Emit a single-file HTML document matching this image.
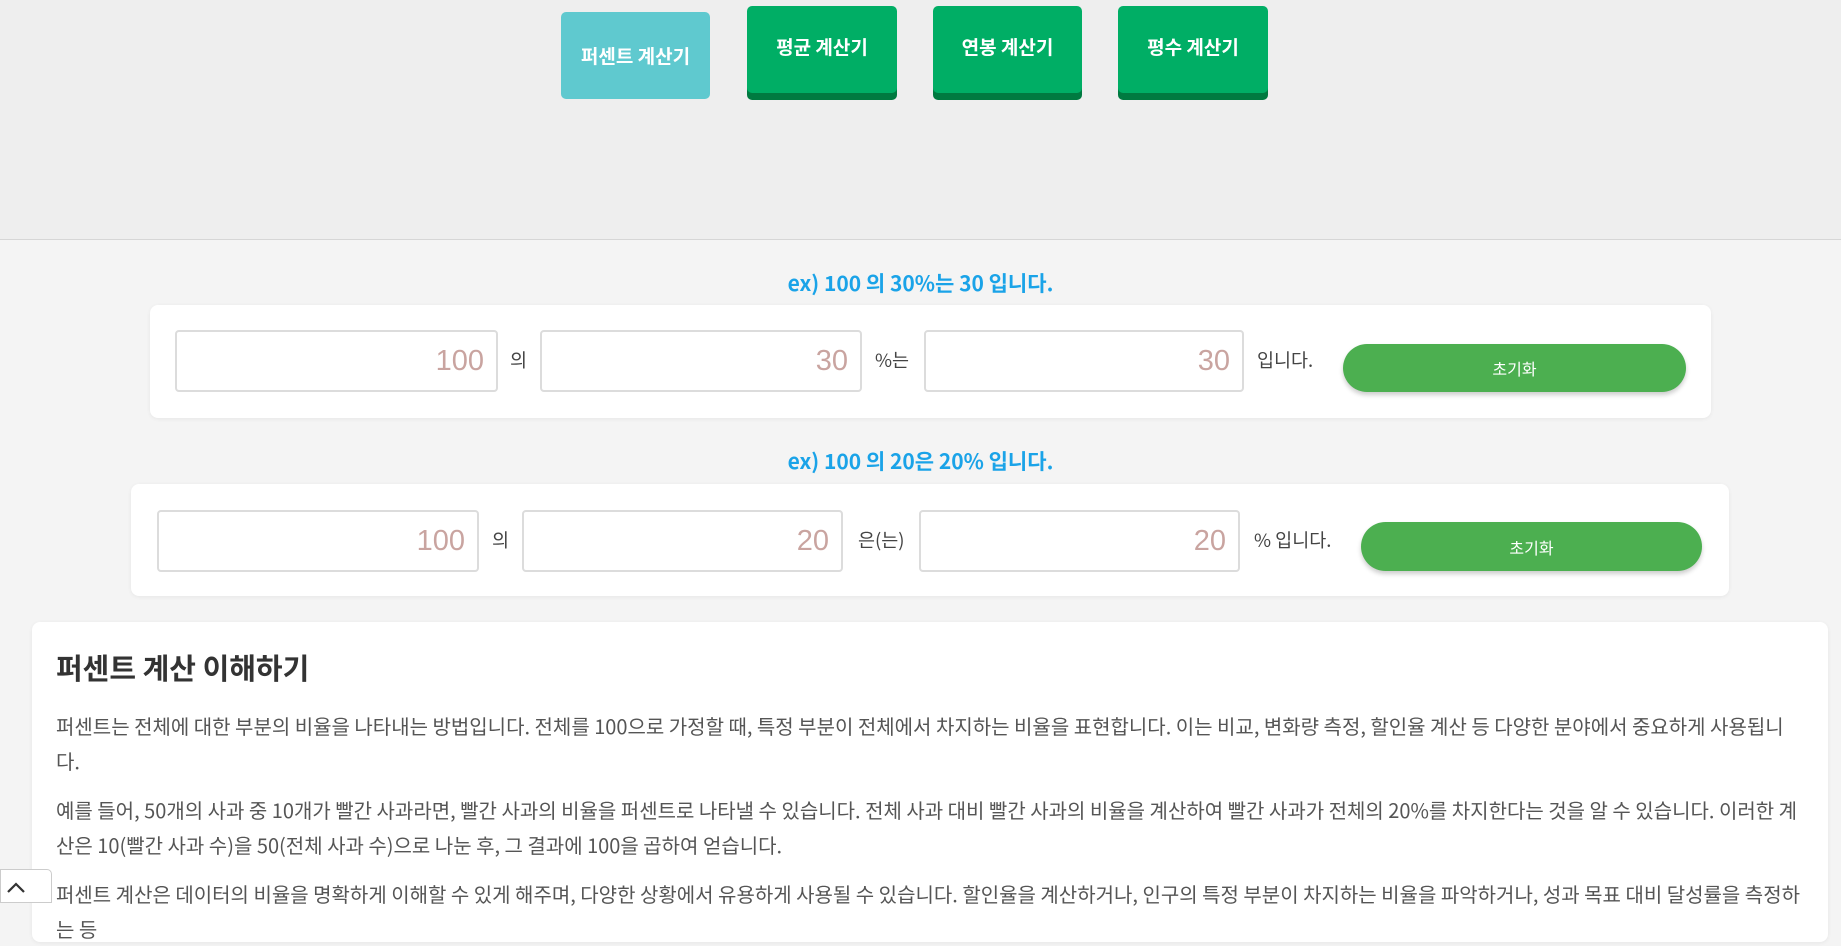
<!DOCTYPE html>
<html><head><meta charset="utf-8"><style>
*{box-sizing:border-box;margin:0;padding:0}
body{width:1841px;height:898px;overflow:hidden;background:#f4f4f4;font-family:"Noto Sans CJK KR","Liberation Sans",sans-serif;position:relative}
.hdr{position:absolute;left:0;top:0;width:1841px;height:240px;background:#eeeeee;border-bottom:1px solid #d6d6d6}
.nb{position:absolute;color:#fff;font-weight:bold;font-size:19px;display:flex;align-items:center;justify-content:center;border-radius:5px}
.g{background:#00ae65;box-shadow:0 7px 0 #007a40;height:87px;top:6px;padding-bottom:6px}
.t{position:absolute;width:100%;text-align:center;color:#1aa3e8;font-weight:bold;font-size:21px}
.card{position:absolute;background:#fff;border-radius:8px;box-shadow:0 1px 4px rgba(0,0,0,.06)}
.in{position:absolute;border:2px solid #dcdcdc;border-radius:4px;background:#fff;color:#c9a4a0;font-family:"Liberation Sans",sans-serif;font-size:29px;text-align:right;padding-right:12px;display:flex;align-items:center;justify-content:flex-end}
.lb{position:absolute;font-size:18.5px;color:#444}
.btn{position:absolute;background:#4caf50;color:#fff;font-size:16px;border-radius:25px;display:flex;align-items:center;justify-content:center;box-shadow:0 3px 5px rgba(0,0,0,.2)}
.p{font-size:20px;color:#555;line-height:35px;margin-bottom:14px}
</style></head><body>
<div class="hdr"></div>
<div class="nb" style="left:561px;top:12px;width:149px;height:87px;background:#5fc9cf">퍼센트 계산기</div>
<div class="nb g" style="left:747px;width:150px">평균 계산기</div>
<div class="nb g" style="left:933px;width:149px">연봉 계산기</div>
<div class="nb g" style="left:1118px;width:150px">평수 계산기</div>

<div class="t" style="top:268px">ex) 100 의 30%는 30 입니다.</div>
<div class="card" style="left:150px;top:305px;width:1561px;height:113px"></div>
<div class="in" style="left:175px;top:330px;width:323px;height:62px">100</div>
<div class="lb" style="left:510px;top:347px">의</div>
<div class="in" style="left:540px;top:330px;width:322px;height:62px">30</div>
<div class="lb" style="left:875px;top:347px">%는</div>
<div class="in" style="left:924px;top:330px;width:320px;height:62px">30</div>
<div class="lb" style="left:1257px;top:347px">입니다.</div>
<div class="btn" style="left:1343px;top:344px;width:343px;height:48px">초기화</div>

<div class="t" style="top:446px">ex) 100 의 20은 20% 입니다.</div>
<div class="card" style="left:131px;top:484px;width:1598px;height:112px"></div>
<div class="in" style="left:157px;top:510px;width:322px;height:62px">100</div>
<div class="lb" style="left:492px;top:527px">의</div>
<div class="in" style="left:522px;top:510px;width:321px;height:62px">20</div>
<div class="lb" style="left:858px;top:527px">은(는)</div>
<div class="in" style="left:919px;top:510px;width:321px;height:62px">20</div>
<div class="lb" style="left:1254px;top:527px">% 입니다.</div>
<div class="btn" style="left:1361px;top:522px;width:341px;height:49px">초기화</div>

<div class="card" style="left:32px;top:622px;width:1796px;height:320px;padding:24px 24px">
<div style="font-size:29px;font-weight:bold;color:#333;margin-bottom:20px">퍼센트 계산 이해하기</div>
<p class="p">퍼센트는 전체에 대한 부분의 비율을 나타내는 방법입니다. 전체를 100으로 가정할 때, 특정 부분이 전체에서 차지하는 비율을 표현합니다. 이는 비교, 변화량 측정, 할인율 계산 등 다양한 분야에서 중요하게 사용됩니다.</p>
<p class="p">예를 들어, 50개의 사과 중 10개가 빨간 사과라면, 빨간 사과의 비율을 퍼센트로 나타낼 수 있습니다. 전체 사과 대비 빨간 사과의 비율을 계산하여 빨간 사과가 전체의 20%를 차지한다는 것을 알 수 있습니다. 이러한 계산은 10(빨간 사과 수)을 50(전체 사과 수)으로 나눈 후, 그 결과에 100을 곱하여 얻습니다.</p>
<p class="p">퍼센트 계산은 데이터의 비율을 명확하게 이해할 수 있게 해주며, 다양한 상황에서 유용하게 사용될 수 있습니다. 할인율을 계산하거나, 인구의 특정 부분이 차지하는 비율을 파악하거나, 성과 목표 대비 달성률을 측정하는 등</p>
</div>
<div style="position:absolute;left:0;top:869px;width:52px;height:34px;background:#fff;border:1px solid #ccc;border-radius:0 5px 0 0;padding:6px 0 0 5px">
<svg width="20" height="14" viewBox="0 0 20 14"><path d="M2 11 L10 3 L18 11" stroke="#333" stroke-width="2.2" fill="none"/></svg></div>
</body></html>
